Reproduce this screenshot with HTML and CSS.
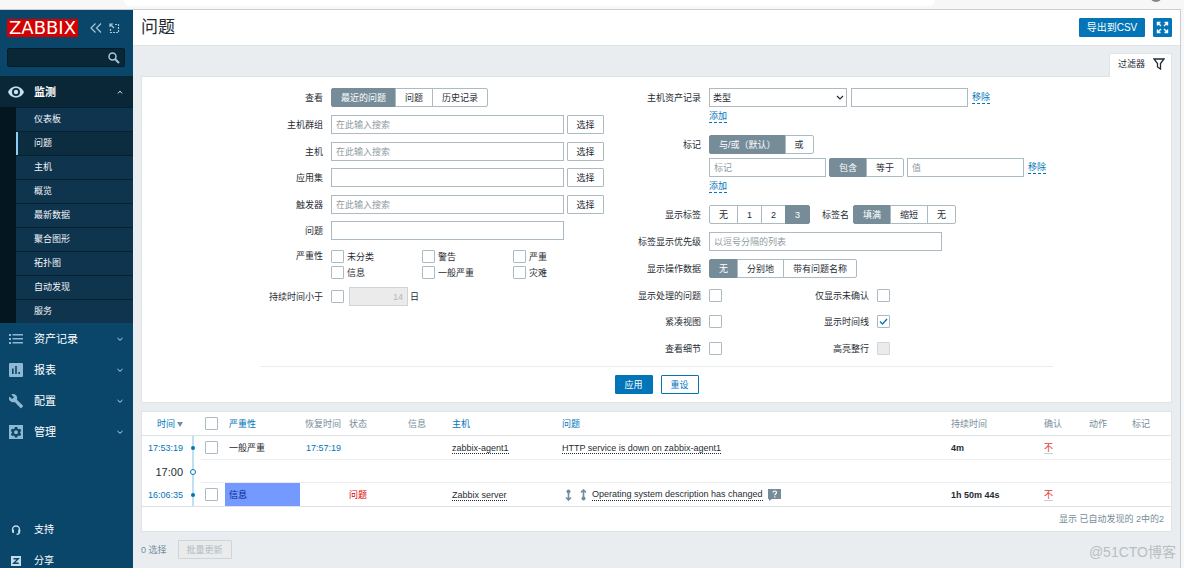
FILE: index.html
```html
<!DOCTYPE html>
<html lang="zh-CN">
<head>
<meta charset="utf-8">
<title>问题</title>
<link rel="stylesheet" href="styles.css">
</head>
<body>
<div class="browser-strip"><div class="address-bar"></div><div class="avatar"></div></div>
<div class="window">
<aside class="sidebar">
  <div class="brand">
    <a class="logo" href="#">ZABBIX</a>
    <button class="icon-btn" type="button" aria-label="收起"><svg width="12" height="10" viewBox="0 0 12 10"><path d="M5.500 .5 1 5l4.500 4.500M11 .5 6.500 5 11 9.500"/></svg></button>
    <button class="icon-btn" type="button" aria-label="隐藏"><svg width="11" height="11" viewBox="0 0 11 11"><path d="M6 1.500h3.500V9.500H1.500V6" stroke-dasharray="2 1"/><path d="M5 5 1 1M1 4V1h3"/></svg></button>
  </div>
  <form class="search"><input type="text" aria-label="搜索"><button type="button" class="icon-btn" aria-label="搜索"><svg width="12" height="12" viewBox="0 0 12 12"><circle cx="4.500" cy="4.500" r="3.500" stroke-width="1.500"/><path d="m7 7 4 4" stroke-width="2"/></svg></button></form>
  <nav class="menu">
    <a class="menu-item current" href="#"><svg class="mi" viewBox="0 0 16 16"><path fill-rule="evenodd" d="M8 2.500C4 2.500 1.200 5 0 8c1.200 3 4 5.500 8 5.500s6.800-2.500 8-5.500c-1.200-3-4-5.500-8-5.500zM8 12a4 4 0 1 1 0-8 4 4 0 0 1 0 8zm0-1.800a2.200 2.200 0 1 0 0-4.400 2.200 2.200 0 0 0 0 4.400z"/></svg><span>监测</span><svg class="chev" viewBox="0 0 6 4"><path d="M1 3.500 3 1l2 2.500"/></svg></a>
    <div class="submenu">
      <a href="#">仪表板</a><a class="selected" href="#">问题</a><a href="#">主机</a><a href="#">概览</a><a href="#">最新数据</a><a href="#">聚合图形</a><a href="#">拓扑图</a><a href="#">自动发现</a><a href="#">服务</a>
    </div>
    <a class="menu-item" href="#"><svg class="mi" viewBox="0 0 16 16"><path d="M1 3h2v2H1zm3.500 0H15v1.600H4.500zM1 7h2v2H1zm3.500 0H15v1.600H4.500zM1 11h2v2H1zm3.500 0H15v1.600H4.500z"/></svg><span>资产记录</span><svg class="chev" viewBox="0 0 6 4"><path d="M.5 1 3 3.300 5.500 1"/></svg></a>
    <a class="menu-item" href="#"><svg class="mi" viewBox="0 0 16 16"><path fill-rule="evenodd" d="M2 1h12a1 1 0 0 1 1 1v12a1 1 0 0 1-1 1H2a1 1 0 0 1-1-1V2a1 1 0 0 1 1-1zm2 5.500V12h1.600V6.500zM7.200 4v8h1.600V4zm3.200 6v2H12v-2z"/></svg><span>报表</span><svg class="chev" viewBox="0 0 6 4"><path d="M.5 1 3 3.300 5.500 1"/></svg></a>
    <a class="menu-item" href="#"><svg class="mi" viewBox="0 0 16 16"><path d="M14.800 12.600 8.900 6.700c.6-1.500.3-3.200-.9-4.400C6.700 1 4.800.8 3.300 1.500l2.700 2.700-1.900 1.900-2.700-2.700C.6 4.900.9 6.900 2.200 8.100c1.200 1.200 3 1.500 4.400.9l5.900 5.900c.3.300.7.3.9 0l1.500-1.500c.2-.2.2-.6-.1-.8z"/></svg><span>配置</span><svg class="chev" viewBox="0 0 6 4"><path d="M.5 1 3 3.300 5.500 1"/></svg></a>
    <a class="menu-item" href="#"><svg class="mi" viewBox="0 0 16 16"><path fill-rule="evenodd" d="M1 1h14v14H1zm5.900 2-.4 1.600-1 .6-1.500-.5-1.200 2L4 7.900v1L2.800 10 4 12l1.500-.5 1 .6.400 1.400h2.300l.4-1.400 1-.6 1.500.5 1.200-2L12.100 8.900v-1l1.200-1.200-1.200-2-1.500.5-1-.6L9.200 3zM8 6.300a2 2 0 1 1 0 4 2 2 0 0 1 0-4z"/></svg><span>管理</span><svg class="chev" viewBox="0 0 6 4"><path d="M.5 1 3 3.300 5.500 1"/></svg></a>
  </nav>
  <nav class="menu-foot">
    <a class="menu-item small" href="#"><svg class="mi" viewBox="0 0 16 16"><path d="M4.500 9V7.500a3.500 3.500 0 0 1 7 0V10c0 1.500-1 2.300-3 2.300" fill="none" stroke="#c3dcec" stroke-width="1.300"/><path d="M4 7.500h2v3.500H4.700L4 10zm6.200 0h2V10l-.7 1h-1.300z" fill="#c3dcec"/></svg><span>支持</span></a>
    <a class="menu-item small" href="#"><svg class="mi" viewBox="0 0 16 16"><path d="M3 3h10v10H3z" fill="#c3dcec"/><path d="M5.500 5.700h4.800l-4.600 4.600h5" fill="none" stroke="#0a466a" stroke-width="1.400"/></svg><span>分享</span></a>
  </nav>
</aside>
<main class="content">
  <header class="page-head">
    <h1>问题</h1>
    <button type="button" class="btn primary csv">导出到CSV</button>
    <button type="button" class="btn primary full" aria-label="全屏"><svg width="13" height="13" viewBox="0 0 13 13"><path d="M1.500 4.500v-3h3M8.500 1.500h3v3M11.500 8.500v3h-3M4.500 11.500h-3v-3M1.500 1.500 5 5M11.500 1.500 8 5M11.500 11.500 8 8M1.500 11.500 5 8" fill="none" stroke="#fff" stroke-width="1.400"/></svg></button>
  </header>
  <div class="tabs"><a class="filter-tab" href="#">过滤器<svg width="12" height="12" viewBox="0 0 12 12"><path d="M1 1h10L7.500 5.500V11L4.500 9V5.500z" fill="none" stroke="#1f2c33" stroke-width="1.300"/></svg></a></div>
  <form class="filter">
    <div class="filter-cols">
      <div class="col-left">
        <div class="row"><span class="label">查看</span><div class="seg"><button type="button" class="on">最近的问题</button><button type="button">问题</button><button type="button">历史记录</button></div></div>
        <div class="row"><label class="label" for="g">主机群组</label><input id="g" class="wide" type="text" placeholder="在此输入搜索"><button type="button" class="btn pick">选择</button></div>
        <div class="row tight"><label class="label" for="h">主机</label><input id="h" class="wide" type="text" placeholder="在此输入搜索"><button type="button" class="btn pick">选择</button></div>
        <div class="row"><label class="label" for="a">应用集</label><input id="a" class="wide" type="text"><button type="button" class="btn pick">选择</button></div>
        <div class="row tight"><label class="label" for="t">触发器</label><input id="t" class="wide" type="text" placeholder="在此输入搜索"><button type="button" class="btn pick">选择</button></div>
        <div class="row"><label class="label" for="p">问题</label><input id="p" class="wide" type="text"></div>
        <div class="row top"><span class="label">严重性</span><div class="sev-grid">
          <label><input type="checkbox">未分类</label><label><input type="checkbox">警告</label><label><input type="checkbox">严重</label>
          <label><input type="checkbox">信息</label><label><input type="checkbox">一般严重</label><label><input type="checkbox">灾难</label></div></div>
        <div class="row"><label class="label" for="d">持续时间小于</label><input id="d" type="checkbox"><input class="days" type="text" value="14" disabled aria-label="日"><span class="unit">日</span></div>
      </div>
      <div class="col-right">
        <div class="group">
          <div class="row"><label class="label" for="inv">主机资产记录</label><select id="inv" class="inv"><option>类型</option></select><input class="mid" type="text" aria-label="资产值"><button type="button" class="link">移除</button></div>
          <div class="row add"><span class="label"></span><button type="button" class="link">添加</button></div>
        </div>
        <div class="group">
          <div class="row"><span class="label">标记</span><div class="seg"><button type="button" class="on">与/或（默认）</button><button type="button">或</button></div></div>
          <div class="row"><span class="label"></span><input class="mid" type="text" placeholder="标记" aria-label="标记"><div class="seg after"><button type="button" class="on">包含</button><button type="button">等于</button></div><input class="mid after" type="text" placeholder="值" aria-label="值"><button type="button" class="link">移除</button></div>
          <div class="row add"><span class="label"></span><button type="button" class="link">添加</button></div>
        </div>
        <div class="row"><span class="label">显示标签</span><div class="seg"><button type="button">无</button><button type="button">1</button><button type="button">2</button><button type="button" class="on">3</button></div><span class="mini-label">标签名</span><div class="seg"><button type="button" class="on">填满</button><button type="button">缩短</button><button type="button">无</button></div></div>
        <div class="row"><label class="label" for="pr">标签显示优先级</label><input id="pr" class="wide" type="text" placeholder="以逗号分隔的列表"></div>
        <div class="row"><span class="label">显示操作数据</span><div class="seg"><button type="button" class="on">无</button><button type="button">分别地</button><button type="button">带有问题名称</button></div></div>
        <div class="row tight"><label class="label" for="c1">显示处理的问题</label><input id="c1" type="checkbox"><label class="label2" for="c2">仅显示未确认</label><input id="c2" type="checkbox"></div>
        <div class="row"><label class="label" for="c3">紧凑视图</label><input id="c3" type="checkbox"><label class="label2" for="c4">显示时间线</label><input id="c4" type="checkbox" checked></div>
        <div class="row"><label class="label" for="c5">查看细节</label><input id="c5" type="checkbox"><label class="label2" for="c6">高亮整行</label><input id="c6" type="checkbox" disabled></div>
      </div>
    </div>
    <div class="filter-foot"><button type="button" class="btn primary">应用</button><button type="button" class="btn outline">重设</button></div>
  </form>
  <section class="list">
    <table>
      <colgroup><col class="w-time"><col class="w-line"><col class="w-cb"><col class="w-sev"><col class="w-rec"><col class="w-stat"><col class="w-info"><col class="w-host"><col><col class="w-dur"><col class="w-ack"><col class="w-act"><col class="w-act"></colgroup>
      <thead><tr><th class="r"><a href="#">时间</a><span class="sort"></span></th><th></th><th class="cb"><input type="checkbox" aria-label="全选"></th><th><a href="#">严重性</a></th><th class="r">恢复时间</th><th>状态</th><th>信息</th><th><a href="#">主机</a></th><th><a href="#">问题</a></th><th>持续时间</th><th>确认</th><th>动作</th><th>标记</th></tr></thead>
      <tbody>
        <tr><td class="r nb"><a href="#">17:53:19</a></td><td class="line nb"><span class="dot"></span></td><td class="cb"><input type="checkbox" aria-label="选择"></td><td>一般严重</td><td class="r"><a href="#">17:57:19</a></td><td></td><td></td><td><a class="dotted" href="#">zabbix-agent1</a></td><td><a class="dotted" href="#">HTTP service is down on zabbix-agent1</a></td><td class="dur">4m</td><td><a class="no" href="#">不</a></td><td></td><td></td></tr>
        <tr class="hour"><td class="r nb">17:00</td><td class="line nb"><span class="dot ring"></span></td><td colspan="11"></td></tr>
        <tr><td class="r nb"><a href="#">16:06:35</a></td><td class="line nb"><span class="dot"></span></td><td class="cb"><input type="checkbox" aria-label="选择"></td><td class="info-bg">信息</td><td></td><td class="red">问题</td><td></td><td><a class="dotted" href="#">Zabbix server</a></td><td><div class="dep"><svg width="7" height="12" viewBox="0 0 7 12"><path d="M3.500 2v8M1 8.500 3.500 11 6 8.500" fill="none" stroke="#768d99" stroke-width="1.600"/><circle cx="3.500" cy="2.500" r="2" fill="#768d99"/></svg><svg width="7" height="12" viewBox="0 0 7 12"><path d="M3.500 2v8M1 3.500 3.500 1 6 3.500" fill="none" stroke="#768d99" stroke-width="1.600"/><circle cx="3.500" cy="9.500" r="2" fill="#768d99"/></svg><a class="dotted" href="#">Operating system description has changed</a><svg width="13" height="12" viewBox="0 0 13 12"><path d="M0 0h13v10H4l-3 2V10H0z" fill="#768d99"/><path d="M5 3.500c0-2 3.500-2 3.500 0 0 1.400-1.700 1.200-1.700 2.800M6.800 7.300v1.200" fill="none" stroke="#fff" stroke-width="1.200"/></svg></div></td><td class="dur">1h 50m 44s</td><td><a class="no" href="#">不</a></td><td></td><td></td></tr>
      </tbody>
    </table>
    <div class="total">显示 已自动发现的 2中的2</div>
  </section>
  <div class="bulk"><span>0 选择</span><button type="button" class="btn" disabled>批量更新</button></div>
  <div class="watermark">@51CTO博客</div>
</main>
</div>
</body>
</html>
```
FILE: styles.css
```css
* { box-sizing: border-box; }
html { overflow: hidden; }
body {
  margin: 0;
  min-height: 100vh;
  overflow: hidden;
  display: flex;
  flex-direction: column;
  background: #f7f7f7;
  color: #1f2c33;
  font: 9px/12px "Liberation Sans", "Noto Sans CJK SC", sans-serif;
}
button, input, select { font: inherit; color: inherit; margin: 0; }
button { cursor: pointer; }
a { color: #0275b8; text-decoration: none; }

.browser-strip { display: flex; justify-content: space-between; height: 9px; overflow: hidden; padding: 0 22px 0 124px; }
.address-bar { flex: 0 0 811px; height: 6px; background: #fff; border-radius: 0 0 8px 8px; }
.avatar { width: 12px; height: 12px; margin-top: -10px; border-radius: 50%; background: #8a8482; }
.window { flex: 1; display: flex; margin-right: 3px; border-top: 1px solid #c9cdd0; border-right: 1px solid #c9cdd0; }

.sidebar { flex: 0 0 133px; min-width: 0; background: #0a466a; }
.brand { display: flex; align-items: center; gap: 12px; padding: 9px 7px 0; }
.logo { width: 71px; height: 18px; background: #d40000; color: #fff; text-align: center; font: 18px/18px "DejaVu Sans", sans-serif; }
.icon-btn { display: flex; flex: none; padding: 0; border: 0; background: none; }
.brand .icon-btn + .icon-btn { margin-left: -5px; }
.icon-btn svg { fill: none; stroke: #a9c6d8; stroke-width: 1.2; }
.search { display: flex; align-items: center; margin: 11px 8px 9px 7px; height: 19px; padding-right: 4px; background: #0a2738; border: 1px solid #061c29; border-radius: 2px; }
.search input[type="text"] { flex: 1; width: 0; min-width: 0; height: 17px; border: 0; background: none; color: #fff; }
.menu-item { display: flex; align-items: center; height: 31px; padding: 0 10px 0 8px; color: #fff; font-size: 11px; }
.menu-item span { flex: 1; padding-left: 10px; }
.current { background: #0a2738; font-weight: bold; }
.mi { width: 16px; height: 16px; fill: #8fb8d2; }
.current .mi { fill: #c3e1f4; }
.chev { width: 6px; height: 4px; fill: none; stroke: #c3dcec; }
.submenu { background: #04161f; padding-left: 16px; }
.submenu a { display: block; height: 24px; padding-left: 18px; line-height: 23px; color: #f2f6f9; background: #0f344e; border-top: 1px solid #06202f; }
.submenu .selected { background: #0c2c40; box-shadow: inset 2px 0 #8ccdf2; }
.menu-foot { margin-top: 67px; }
.small { font-size: 10px; }

.content { flex: 1; min-width: 0; background: #e9edf0; position: relative; }
.page-head { display: flex; align-items: center; gap: 8px; height: 36px; padding: 0 8px; background: #fff; border-bottom: 1px solid #dfe4e7; }
h1 { flex: 1; margin: 0; font-size: 17px; line-height: 24px; font-weight: normal; }
.btn { height: 19px; padding: 0 8px; border: 1px solid #acbbc2; border-radius: 1px; background: #fff; line-height: 12px; white-space: nowrap; }
.primary { background: #0275b8; border-color: #0275b8; color: #fff; }
.outline { border-color: #0275b8; color: #0275b8; }
.csv { width: 66px; font-size: 10px; padding: 0; }
.full { display: flex; align-items: center; justify-content: center; width: 19px; padding: 0; }
.tabs { display: flex; justify-content: flex-end; padding: 7px 8px 0; }
.filter-tab { display: flex; align-items: center; gap: 8px; height: 24px; padding: 0 6px 4px 8px; background: #fff; border: 1px solid #dfe4e7; border-bottom: 0; color: #1f2c33; }

.filter { margin: -1px 8px 0; padding: 11px 0 8px; background: #fff; border: 1px solid #dfe4e7; }
.filter-cols { display: flex; max-width: 793px; margin: 0 auto; padding-bottom: 8px; border-bottom: 1px solid #e9edf0; }
.col-left { flex: 0 0 344px; }
.col-right { flex: 1; min-width: 0; }
.row { display: flex; align-items: center; min-height: 19px; margin-bottom: 8px; }
.tight { margin-bottom: 7px; }
.row.top { align-items: flex-start; padding-top: 2px; }
.row:last-child { margin-bottom: 0; }
.label { flex: none; margin-right: 8px; text-align: right; }
.col-left .label { width: 63px; }
.col-right .label { width: 97px; }
.group { margin-bottom: 12px; }
.group .row { margin-bottom: 4px; }
.group .add { min-height: 12px; margin-bottom: 0; }
.group .add .link { margin-left: 0; }
input[type="text"], select { height: 19px; border: 1px solid #acbbc2; border-radius: 0; background: #fff; padding: 0 4px; outline: 0; }
input::placeholder { color: #8f9ba2; opacity: 1; }
.wide { width: 233px; }
.mid { width: 117px; }
select.inv { appearance: none; width: 138px; margin-right: 4px; padding: 0 3px; background: #fff url("data:image/svg+xml,%3Csvg xmlns='http://www.w3.org/2000/svg' width='8' height='6' viewBox='0 0 8 6'%3E%3Cpath d='M1 1l3 3 3-3' fill='none' stroke='%231f2c33' stroke-width='1.200'/%3E%3C/svg%3E") right 2px center no-repeat; }
.after { margin-left: 3px; }
.pick { margin-left: 3px; width: 37px; }
.link { margin-left: 4px; padding: 0; border: 0; border-bottom: 1px dashed #0275b8; background: none; color: #0275b8; line-height: 11px; }
.seg { display: flex; }
.seg button { height: 19px; padding: 0 9px; border: 1px solid #acbbc2; background: #fff; line-height: 12px; white-space: nowrap; }
.seg button + button { margin-left: -1px; }
.seg button:first-child { border-radius: 2px 0 0 2px; }
.seg button:last-child { border-radius: 0 2px 2px 0; }
.seg .on { background: #768d99; border-color: #768d99; color: #fff; }
.mini-label { margin: 0 4px 0 12px; }
.label2 { width: 155px; padding-right: 8px; text-align: right; }
input[type="checkbox"] { appearance: none; flex: none; width: 13px; height: 13px; border: 1px solid #acbbc2; border-radius: 1px; background: #fff; }
input[type="checkbox"]:checked { background: #fff url("data:image/svg+xml,%3Csvg xmlns='http://www.w3.org/2000/svg' viewBox='0 0 11 11'%3E%3Cpath d='M2 5.500 4.500 8 9 3' fill='none' stroke='%230275b8' stroke-width='1.300'/%3E%3C/svg%3E"); }
input[type="checkbox"]:disabled { background: #ebebeb; border-color: #d0d6d9; }
.sev-grid { display: grid; grid-template-columns: repeat(3, 91px); row-gap: 3px; }
.sev-grid label { display: flex; align-items: center; gap: 3px; height: 13px; }
.days:disabled { width: 59px; margin-left: 5px; text-align: right; background: #ebebeb; border-color: #ccd5d9; color: #acbbc2; }
.unit { margin-left: 2px; }
.filter-foot { display: flex; justify-content: center; gap: 8px; padding-top: 8px; }
.filter-foot .btn { width: 38px; }

.list { margin: 8px 8px 0; background: #fff; border: 1px solid #dfe4e7; }
table { width: 100%; table-layout: fixed; border-collapse: separate; border-spacing: 0; }
.w-time { width: 45px; } .w-line { width: 14px; } .w-cb { width: 24px; } .w-sev { width: 75px; }
.w-rec { width: 45px; } .w-stat { width: 59px; } .w-info { width: 44px; } .w-host { width: 110px; }
.w-dur { width: 93px; } .w-ack { width: 45px; } .w-act { width: 43px; }
th, td { height: 24px; padding: 0 4px; border-bottom: 1px solid #ebeef0; text-align: left; font-weight: normal; white-space: nowrap; }
th { color: #768d99; border-color: #dce2e5; }
.r { text-align: right; }
td.nb { border-bottom: 0; }
th.r, td.r { padding-left: 0; }
tbody tr:last-child td { border-bottom: 1px solid #dce2e5; }
.cb input { display: block; }
.sort { display: inline-block; margin-left: 2px; border: 3px solid transparent; border-top: 5px solid #768d99; border-bottom: 0; }
td.line { padding: 0; background: linear-gradient(#c0e1f2, #c0e1f2) 5px 0 / 2px 100% no-repeat; }
.dot { display: block; width: 4px; height: 4px; margin-left: 4px; border-radius: 50%; background: #0275b8; }
.ring { width: 6px; height: 6px; margin-left: 3px; border: 1px solid #0275b8; background: #fff; }
.hour td { height: 23px; font-size: 11px; }
.info-bg { background: #7499ff; color: #00268e; }
.red { color: #dc0000; }
.dotted { color: #1f2c33; border-bottom: 1px dotted #1f2c33; }
.no { color: #e33734; border-bottom: 1px solid #c8cfd3; }
.dur { font-weight: bold; }
.dep { display: flex; align-items: center; gap: 5px; padding-left: 3px; }
.dep svg:first-child { margin-right: 3px; }
.total { padding: 6px 7px; color: #768d99; text-align: right; }
.bulk { display: flex; align-items: center; gap: 11px; padding: 8px; color: #768d99; }
.bulk .btn { background: #ebebeb; border-color: #ccd5d9; color: #acbbc2; }
.watermark { position: absolute; right: 4px; top: 532px; color: #b9bec1; font-size: 14px; line-height: 20px; }
```
